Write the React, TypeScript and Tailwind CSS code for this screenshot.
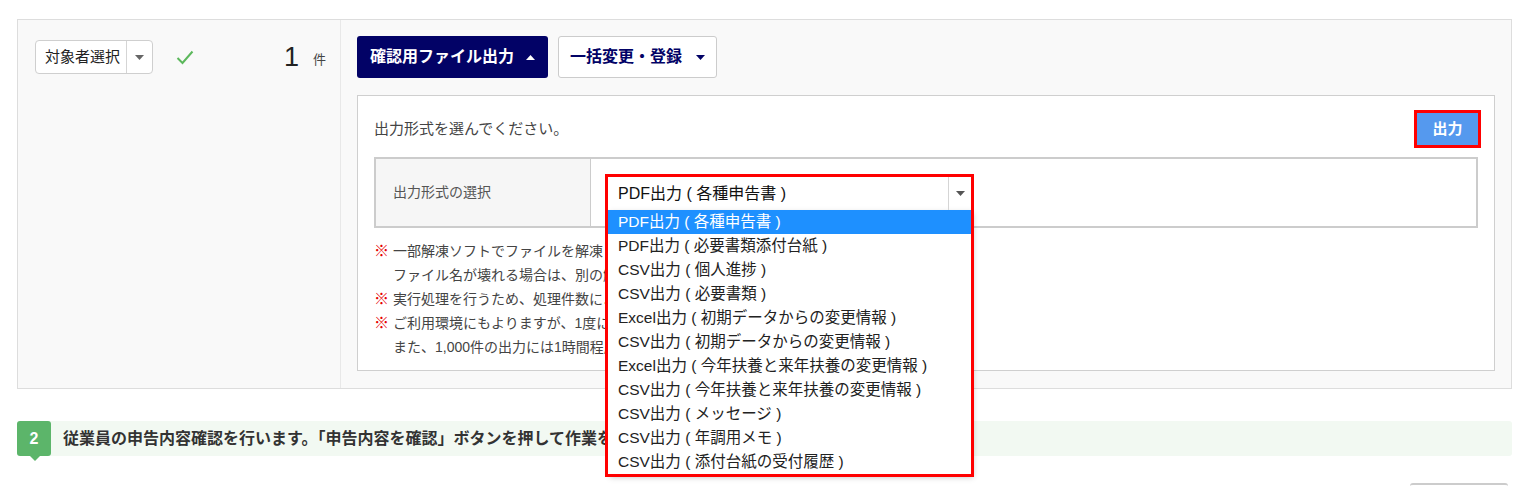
import React from 'react';

const font = { fontFamily: '"Liberation Sans", "Noto Sans CJK JP", sans-serif' };

const formats = [
  'PDF出力 ( 各種申告書 )',
  'PDF出力 ( 必要書類添付台紙 )',
  'CSV出力 ( 個人進捗 )',
  'CSV出力 ( 必要書類 )',
  'Excel出力 ( 初期データからの変更情報 )',
  'CSV出力 ( 初期データからの変更情報 )',
  'Excel出力 ( 今年扶養と来年扶養の変更情報 )',
  'CSV出力 ( 今年扶養と来年扶養の変更情報 )',
  'CSV出力 ( メッセージ )',
  'CSV出力 ( 年調用メモ )',
  'CSV出力 ( 添付台紙の受付履歴 )',
];

function Caret({ up = false, className = '' }: { up?: boolean; className?: string }) {
  return (
    <svg width="9" height="5" viewBox="0 0 9 5" className={className}>
      {up ? <path d="M0 5 L4.5 0 L9 5 Z" fill="currentColor" /> : <path d="M0 0 L9 0 L4.5 5 Z" fill="currentColor" />}
    </svg>
  );
}

function Note({ children }: { children: React.ReactNode }) {
  return (
    <div className="flex">
      <span className="w-[19px] shrink-0 text-[15px] font-bold text-[#e60000]">※</span>
      <span>{children}</span>
    </div>
  );
}

export default function App() {
  return (
    <div className="bg-white min-h-[495px] pl-[17px] pr-[22px] pt-[19px] text-[#333]" style={font}>
      {/* Step 1 panel */}
      <div className="flex h-[370px] border border-[#dddddd] bg-[#f9f9f9]">
        {/* Left column */}
        <div className="w-[323px] shrink-0 border-r border-[#e8e8e8] pl-[17px] pt-[20px]">
          <div className="flex items-center">
            <div className="flex h-[34px] w-[118px] items-stretch rounded-[4px] border border-[#cfcfcf] bg-white">
              <span className="flex flex-1 items-center pl-[9px] text-[15px] text-[#222]">対象者選択</span>
              <span className="flex w-[26px] items-center justify-center border-l border-[#d5d5d5] text-[#666]">
                <Caret />
              </span>
            </div>
            <svg width="18" height="15" viewBox="0 0 18 15" className="ml-[23px]">
              <path d="M1.5 8 L6.5 13 L16.5 1.5" fill="none" stroke="#5cb85c" strokeWidth="2" />
            </svg>
            <span className="ml-[90px] text-[27px] leading-none text-[#222]">1</span>
            <span className="ml-[14px] mt-[5px] text-[13px] text-[#444]">件</span>
          </div>
        </div>

        {/* Right column */}
        <div className="flex-1 px-[16px] pt-[16px]">
          <div className="flex gap-[10px]">
            <button className="flex h-[42px] w-[191px] items-center justify-center gap-[12px] rounded-[3px] bg-[#020266] text-[16px] font-bold text-white">
              確認用ファイル出力
              <Caret up />
            </button>
            <button className="flex h-[42px] w-[159px] items-center justify-center gap-[14px] rounded-[3px] border border-[#cccccc] bg-white text-[16px] font-bold text-[#020266]">
              一括変更・登録
              <Caret />
            </button>
          </div>

          <div className="mt-[17px] h-[276px] border border-[#cfcfcf] bg-white px-[16px] pt-[17px]">
            <div className="flex items-center justify-between">
              <span className="text-[15px] text-[#444]">出力形式を選んでください。</span>
              <button className="flex h-[32px] w-[61px] items-center justify-center bg-[#5599ee] text-[15px] font-bold text-white outline-[3px] outline-solid outline-[#ff0000]">
                出力
              </button>
            </div>

            {/* Format table */}
            <div className="mt-[12px] flex h-[71px] border-2 border-[#cccccc]">
              <div className="flex w-[215px] items-center border-r border-[#cccccc] bg-[#f6f6f6] pl-[17px] text-[14px] text-[#555]">
                出力形式の選択
              </div>
              <div className="flex-1 pl-[17px] pt-[18px]">
                <div className="relative h-[33px] w-[363px]">
                  <div className="absolute left-0 top-0 z-10 w-[363px] outline-[3px] outline-solid outline-[#ff0000]">
                    <div className="flex h-[33px] items-stretch bg-white">
                      <span className="flex flex-1 items-center pl-[10px] text-[16px] text-[#111]">PDF出力 ( 各種申告書 )</span>
                      <span className="flex w-[23px] items-center justify-center border-l border-[#d5d5d5] text-[#555]">
                        <Caret />
                      </span>
                    </div>
                    <ul className="bg-white shadow-[2px_3px_6px_rgba(0,0,0,0.25)]">
                      {formats.map((f, i) => (
                        <li
                          key={f}
                          className={
                            i === 0
                              ? 'flex h-[24px] items-center bg-[#1e90ff] pl-[10px] text-[15.5px] text-white'
                              : 'flex h-[24px] items-center pl-[10px] text-[15.5px] text-[#222]'
                          }
                        >
                          {f}
                        </li>
                      ))}
                    </ul>
                  </div>
                </div>
              </div>
            </div>

            {/* Notes */}
            <div className="mt-[11px] text-[14px] leading-[24px] text-[#444]">
              <Note>
                一部解凍ソフトでファイルを解凍した際に、ファイル名が文字化けする場合があります。
                <br />
                ファイル名が壊れる場合は、別の解凍ソフトをご利用ください。
              </Note>
              <Note>実行処理を行うため、処理件数によっては時間がかかる場合があります。</Note>
              <Note>
                ご利用環境にもよりますが、1度に出力できる件数は1,000件程度を目安としてください。
                <br />
                また、1,000件の出力には1時間程度かかる場合があります。
              </Note>
            </div>
          </div>
        </div>
      </div>

      {/* Step 2 */}
      <div className="mt-[32px] flex h-[35px] items-center rounded-[3px] bg-[#f2f9f2]">
        <div className="relative flex h-[35px] w-[34px] items-center justify-center rounded-[3px] bg-[#5cb56a] text-[16px] font-bold text-white">
          2
          <span className="absolute left-[13px] top-[35px] h-0 w-0 border-x-[5px] border-t-[5px] border-x-transparent border-t-[#5cb56a]" />
        </div>
        <span className="ml-[12px] text-[16px] font-bold text-[#333]">
          従業員の申告内容確認を行います。「申告内容を確認」ボタンを押して作業を開始してください。
        </span>
      </div>

      <div className="mt-[27px] flex justify-end pr-[4px]">
        <div className="h-[36px] w-[98px] rounded-[3px] border-t-2 border-[#cccccc]" />
      </div>
    </div>
  );
}
